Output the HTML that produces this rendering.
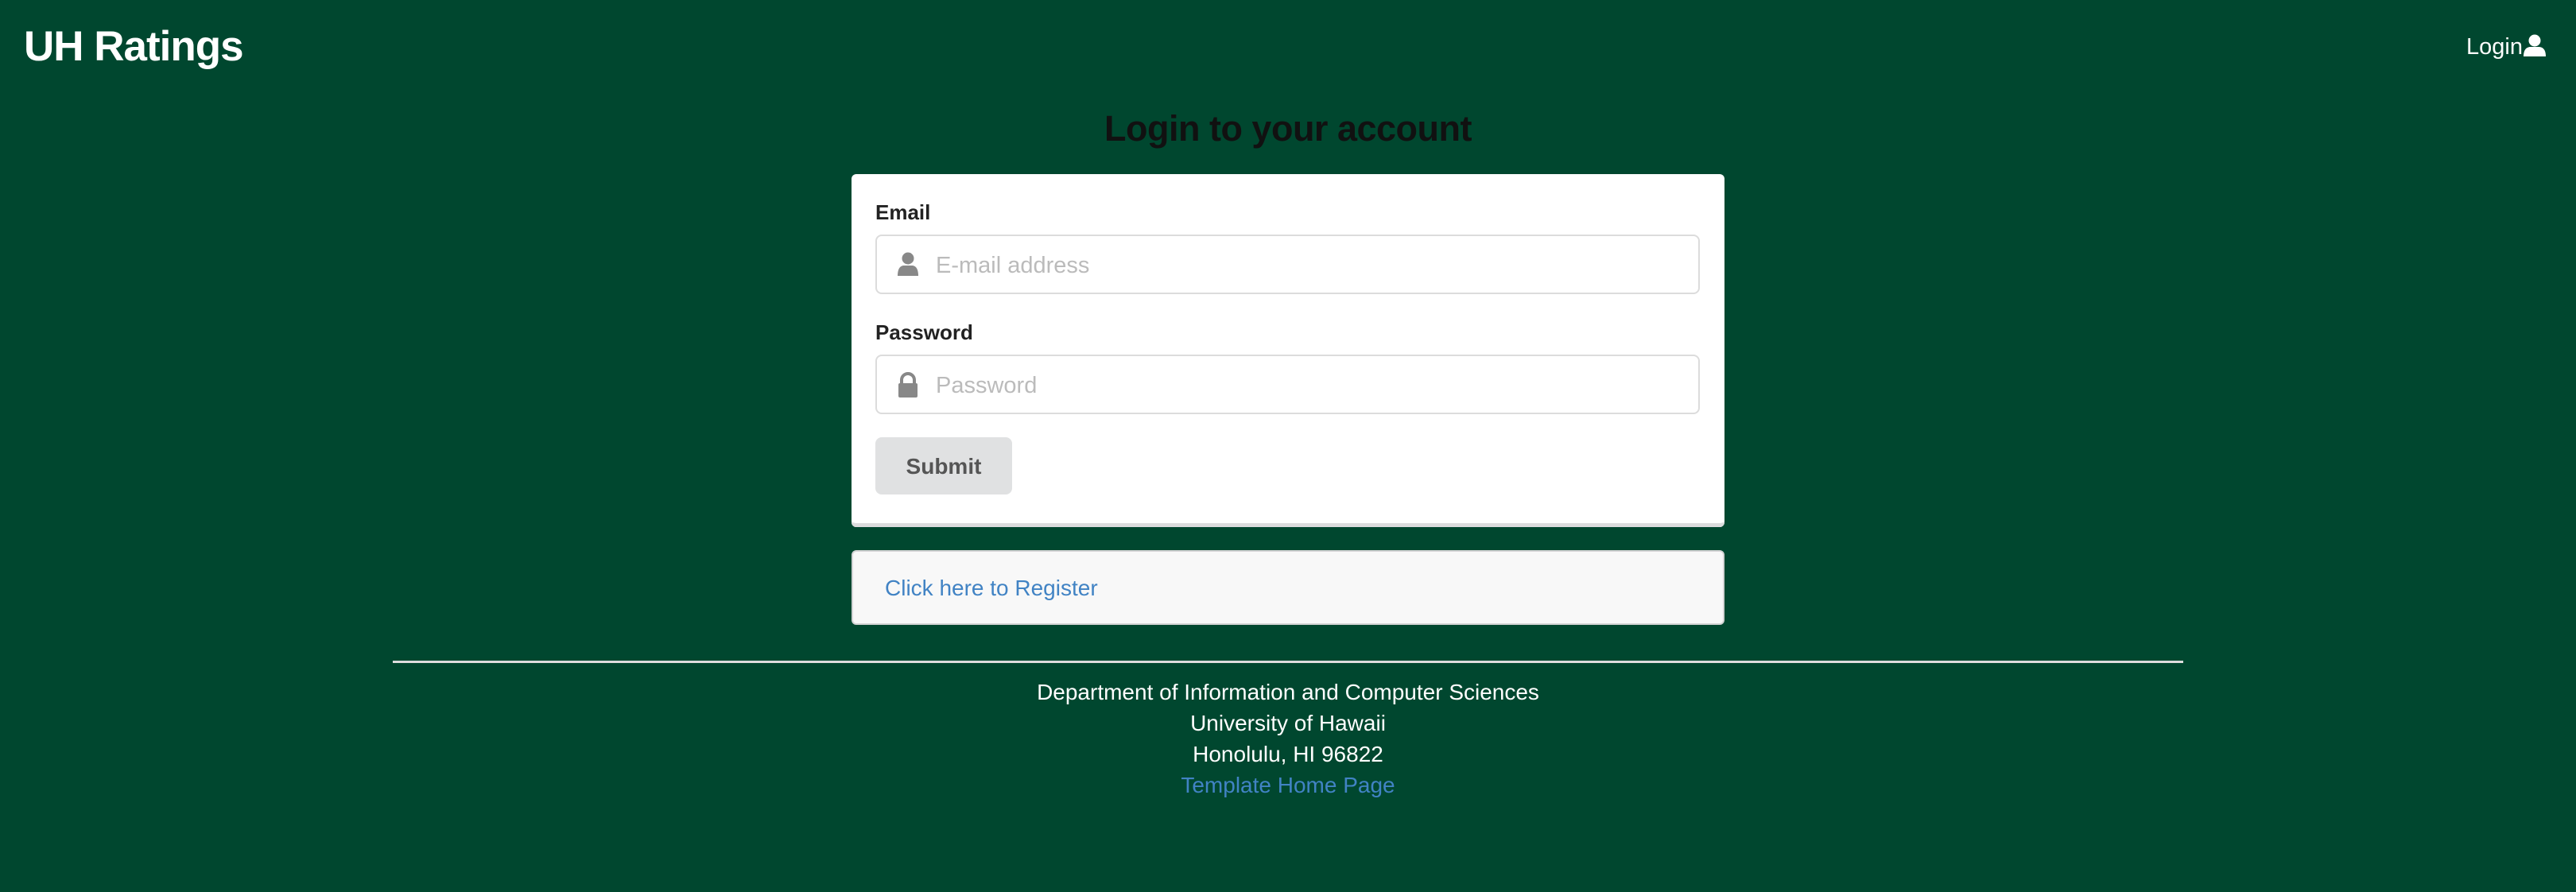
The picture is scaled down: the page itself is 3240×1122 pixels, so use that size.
<!DOCTYPE html>
<html><head><meta charset="utf-8"><style>
body{margin:0;width:3240px;height:1122px;background:#00472f;font-family:"Liberation Sans",sans-serif;position:relative;overflow:hidden}
.a{position:absolute}
.brand{left:30px;top:28px;font-size:53px;font-weight:bold;color:#fff;letter-spacing:-1px}
.login{left:3102px;top:43px;font-size:29px;color:#fff}
h1{position:absolute;left:0;width:3240px;top:136px;margin:0;text-align:center;font-size:45px;font-weight:bold;color:#111;letter-spacing:-0.5px}
.card{left:1071px;top:219px;width:1098px;height:444px;background:#fff;border-radius:6px;box-shadow:inset 0 -10px 0 -5px #dcdcdd}
.lbl{font-size:26px;font-weight:bold;color:#222}
.inp{left:1101px;width:1037px;height:75px;border:2px solid #dcdcdc;border-radius:8px;background:#fff;box-sizing:border-box}
.ph{position:absolute;left:74px;top:21px;font-size:29px;color:#bbb}
.btn{left:1101px;top:550px;width:172px;height:72px;background:#e0e1e2;border-radius:8px;font-size:28px;font-weight:bold;color:#555;text-align:center;line-height:74px}
.reg{left:1071px;top:692px;width:1098px;height:94px;background:#f8f8f8;border:2px solid #d4d4d5;border-radius:6px;box-sizing:border-box}
.hr{left:494px;top:831px;width:2252px;height:3px;background:#ddd}
.foot{left:0;width:3240px;top:851px;text-align:center;color:#fff;font-size:28px;line-height:39px}
</style></head><body>
<div class="a brand">UH Ratings</div>
<div class="a login">Login<svg width="30" height="28" viewBox="0 0 30 28" style="vertical-align:-3px"><circle cx="15" cy="8" r="7.5" fill="#fff"/><path d="M1 28 C1 18 6 16 10 16 L20 16 C24 16 29 18 29 28 Z" fill="#fff"/></svg></div>
<h1>Login to your account</h1>
<div class="a card"></div>
<div class="a lbl" style="left:1101px;top:252px">Email</div>
<div class="a inp" style="top:295px"><svg class="a" style="left:24px;top:20px" width="30" height="30" viewBox="0 0 30 30"><circle cx="15" cy="8" r="7.5" fill="#888"/><path d="M2 30 C2 20 6 17 10 17 L20 17 C24 17 28 20 28 30 Z" fill="#888"/></svg><span class="ph">E-mail address</span></div>
<div class="a lbl" style="left:1101px;top:403px">Password</div>
<div class="a inp" style="top:446px"><svg class="a" style="left:24px;top:20px" width="30" height="32" viewBox="0 0 30 32"><path d="M7 14 V10 A8 8 0 0 1 23 10 V14" stroke="#888" stroke-width="4" fill="none"/><rect x="3" y="14" width="24" height="18" rx="2" fill="#888"/></svg><span class="ph">Password</span></div>
<div class="a btn">Submit</div>
<div class="a reg"><span class="a" style="left:40px;top:30px;font-size:28px;color:#4183c4">Click here to Register</span></div>
<div class="a hr"></div>
<div class="a foot">Department of Information and Computer Sciences<br>University of Hawaii<br>Honolulu, HI 96822<br><span style="color:#4183c4">Template Home Page</span></div>
</body></html>
